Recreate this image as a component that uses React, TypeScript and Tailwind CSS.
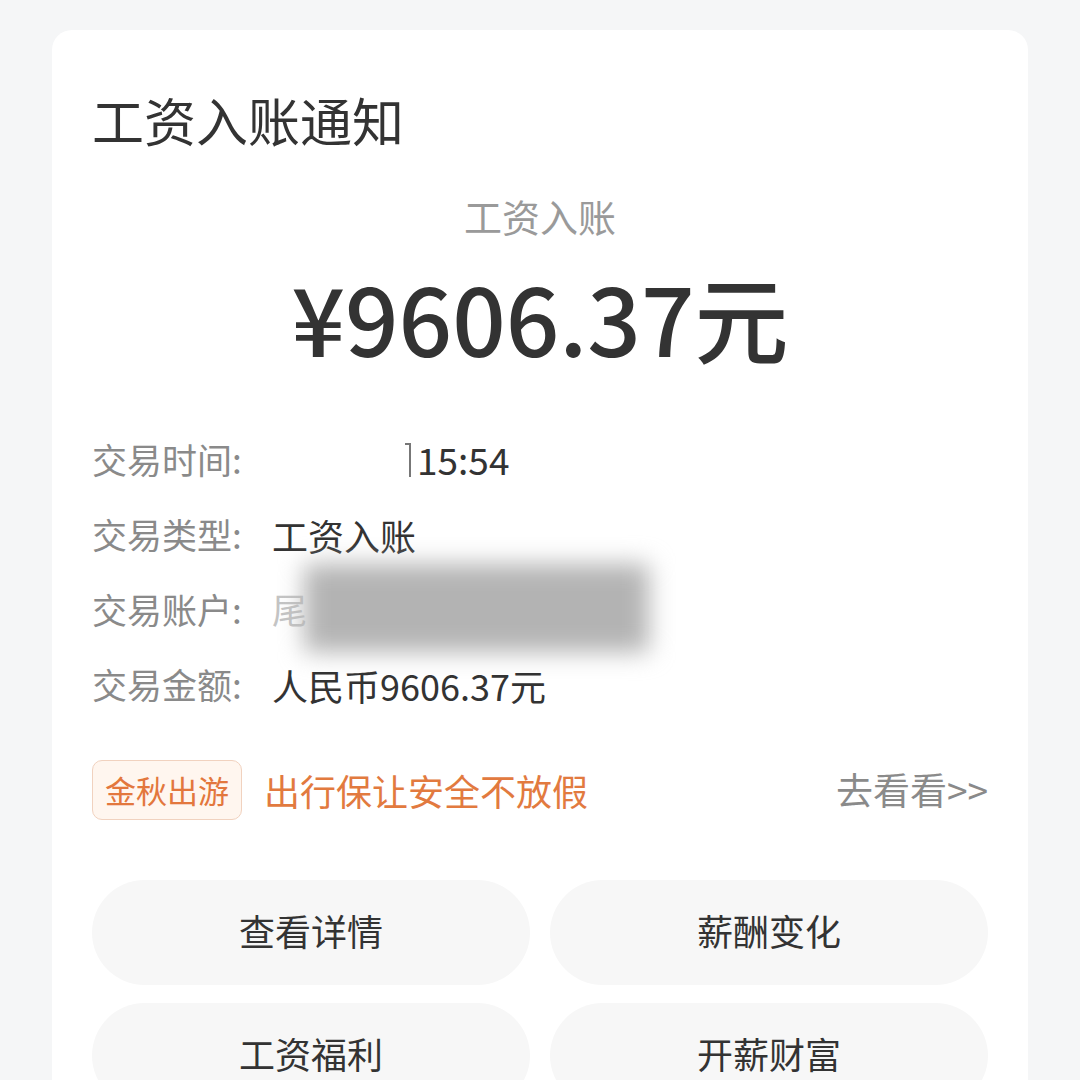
import React from "react";

const rows = [
  { label: "交易时间", value: "time" },
  { label: "交易类型", value: "工资入账" },
  { label: "交易账户", value: "account" },
  { label: "交易金额", value: "人民币9606.37元" },
];

const actions = ["查看详情", "薪酬变化", "工资福利", "开薪财富"];

export default function App() {
  return (
    <div
      className="w-[1080px] h-[1080px] overflow-hidden bg-[#f5f6f7] pt-[30px]"
      style={{ fontFamily: '"Noto Sans CJK SC", "Noto Sans", sans-serif' }}
    >
      <div className="mx-[52px] bg-white rounded-[20px] px-[40px] pt-[60px] pb-[80px]">
        <h1 className="text-[52px] leading-[60px] text-[#333] font-normal">
          工资入账通知
        </h1>
        <div className="mt-[42px] text-center text-[38px] leading-[48px] text-[#9a9a9a]">
          工资入账
        </div>
        <div className="mt-[26px] text-center text-[94px] leading-[100px] text-[#333] font-medium">
          ¥9606.37元
        </div>

        <div className="mt-[56px]">
          {rows.map((r) => (
            <div
              key={r.label}
              className="relative h-[75px] flex items-center text-[35px]"
            >
              <span className="text-[#8a8a8a] w-[180px] shrink-0">
                {r.label}:
              </span>
              {r.value === "time" && (
                <span className="ml-[133px] text-[37px] text-[#333] flex items-center">
                  <span className="inline-block w-[6px] h-[34px] border-t-2 border-r-2 border-[#777] mr-[6px]" />
                  15:54
                </span>
              )}
              {r.value === "account" && (
                <>
                  <span className="text-[#c4c4c4]">尾</span>
                  <div className="absolute left-[212px] top-[-8px] w-[345px] h-[88px] bg-[#b3b3b3] blur-[12px]" />
                </>
              )}
              {r.value !== "time" && r.value !== "account" && (
                <span className="text-[36px] text-[#333]">{r.value}</span>
              )}
            </div>
          ))}
        </div>

        <div className="mt-[38px] h-[60px] flex items-center">
          <span className="h-[60px] w-[150px] flex items-center justify-center rounded-[10px] border border-[#f1d2bf] bg-[#fff6ef] text-[31px] text-[#e3773d]">
            金秋出游
          </span>
          <span className="ml-[22px] text-[36px] text-[#e27a3f]">
            出行保让安全不放假
          </span>
          <span className="ml-auto text-[37px] text-[#8a8a8a]">去看看&gt;&gt;</span>
        </div>

        <div className="mt-[60px] grid grid-cols-2 gap-x-[20px] gap-y-[18px]">
          {actions.map((a) => (
            <div
              key={a}
              className="h-[105px] rounded-full bg-[#f7f7f7] flex items-center justify-center text-[36px] text-[#333] pb-[6px]"
            >
              {a}
            </div>
          ))}
        </div>
      </div>
    </div>
  );
}
